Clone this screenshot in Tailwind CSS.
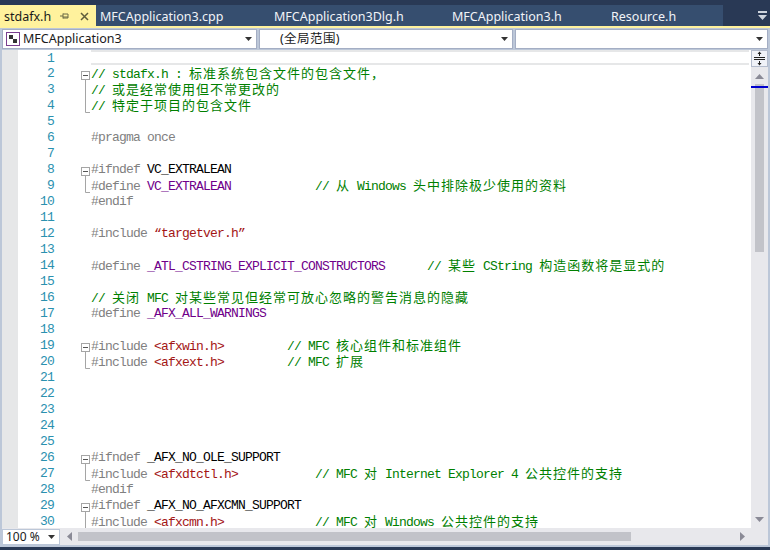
<!DOCTYPE html>
<html lang="zh-CN">
<head>
    <meta charset="UTF-8">
    <title>stdafx.h</title>
    <script src="https://cdn.jsdelivr.net/npm/@tailwindcss/browser@4"></script>
</head>
<body class="w-[770px] h-[550px] overflow-hidden bg-[#293955] font-['Noto_Sans',sans-serif]">
    <!-- Tab well -->
    <div class="h-[5px]"></div>
    <div class="flex h-[21px] text-[12.5px] leading-[21px]">
        <div class="flex w-[96px] items-center bg-[#fff29d] pl-1 pt-[1px] text-[#1a1a1a]">
            <span class="w-[56px]">stdafx.h</span>
            <svg width="10" height="10" viewBox="0 0 10 10"><path d="M0 5h3M3 2.500v5M3 3h5v4H3M3 6h5" fill="none" stroke="#6b6a45"/></svg>
            <svg width="9" height="9" viewBox="0 0 9 9" class="ml-[10px]"><path d="M1 1l7 7M8 1l-7 7" stroke="#5f5d3c" stroke-width="1.500"/></svg>
        </div>
        <div class="flex w-[627px] items-center gap-[51px] bg-[#364e6f] pl-1 pt-[1px] text-[#f1f3f7]">
            <span class="w-[123px] whitespace-nowrap">MFCApplication3.cpp</span>
            <span class="w-[127px] whitespace-nowrap">MFCApplication3Dlg.h</span>
            <span class="w-[108px] whitespace-nowrap">MFCApplication3.h</span>
            <span>Resource.h</span>
        </div>
        <div class="flex flex-1 items-center justify-end pr-[3px]">
            <svg width="9" height="9" viewBox="0 0 9 9"><path d="M0 0h9v2H0zM0 4h9L4.500 9z" fill="#ced4dd"/></svg>
        </div>
    </div>
    <div class="h-[2px] bg-[#fff29d]"></div>

    <div class="flex h-[519px] flex-col border-x-2 border-b-2 border-[#bcc7d8] bg-[#e8e8ec]">
        <!-- Navigation bar -->
        <div class="flex h-[22px] shrink-0 gap-[2px] bg-[#bcc7d8] py-[1px] text-[12.5px] leading-[18px] text-[#1a1a1a]">
            <div class="flex w-[255px] items-center border border-[#a4aec4] bg-white pl-[3px] pr-1">
                <svg width="14" height="14" viewBox="0 0 14 14" class="mr-[3px]"><rect x="0.500" y="0.500" width="13" height="13" fill="#fff" stroke="#7a3f8f"/><path d="M3 3h4v4H3zM7 7h4v4H7z" fill="#333"/></svg>
                <span class="flex-1">MFCApplication3</span>
                <svg width="7" height="4" viewBox="0 0 7 4"><path d="M0 0h7L3.500 4z" fill="#333"/></svg>
            </div>
            <div class="flex w-[254px] items-center border border-[#a4aec4] bg-white pl-[20px] pr-1">
                <span class="flex-1">(全局范围)</span>
                <svg width="7" height="4" viewBox="0 0 7 4"><path d="M0 0h7L3.500 4z" fill="#333"/></svg>
            </div>
            <div class="flex flex-1 items-center justify-end border border-[#a4aec4] bg-white pr-1">
                <svg width="7" height="4" viewBox="0 0 7 4"><path d="M0 0h7L3.500 4z" fill="#333"/></svg>
            </div>
        </div>

        <!-- Editor -->
        <div class="flex h-[478px] shrink-0 overflow-hidden bg-white">
            <div class="flex-1 overflow-hidden font-['Liberation_Mono',monospace] text-[13px] leading-[16px] tracking-[-0.8px] [&_pre]:pt-[1px] [&_pre]:font-[inherit] [&_.text-right]:pt-[1px]">
                <div class="flex h-[15px]">
                    <div class="w-[16px] bg-[#e6e7e8]"></div>
                    <div class="w-[36px] text-right text-[#2b91af]">1</div>
                    <div class="w-[37px]"></div>
                    <div class="mr-[2px] flex-1 border-y-2 border-[#e6e7e8]"></div>
                </div>
                <div class="flex h-[16px]">
                    <div class="w-[16px] bg-[#e6e7e8]"></div>
                    <div class="w-[36px] text-right text-[#2b91af]">2</div>
                    <div class="flex w-[37px] justify-end"><svg width="10" height="16" viewBox="0 0 10 16"><rect x="0.500" y="6.500" width="8" height="8" fill="#fff" stroke="#a5a5a5"/><path d="M2 10.500h5" stroke="#555"/><path d="M4.500 15v1" stroke="#a5a5a5"/></svg></div>
                    <pre class="text-[#008000]">// stdafx.h : <span class="font-['Noto_Sans_CJK_SC'] text-[13px] leading-none tracking-[1px]">标准系统包含文件的包含文件，</span></pre>
                </div>
                <div class="flex h-[16px]">
                    <div class="w-[16px] bg-[#e6e7e8]"></div>
                    <div class="w-[36px] text-right text-[#2b91af]">3</div>
                    <div class="flex w-[37px] justify-end"><svg width="10" height="16" viewBox="0 0 10 16"><path d="M4.500 0v16" stroke="#a5a5a5"/></svg></div>
                    <pre class="text-[#008000]">// <span class="font-['Noto_Sans_CJK_SC'] text-[13px] leading-none tracking-[1px]">或是经常使用但不常更改的</span></pre>
                </div>
                <div class="flex h-[16px]">
                    <div class="w-[16px] bg-[#e6e7e8]"></div>
                    <div class="w-[36px] text-right text-[#2b91af]">4</div>
                    <div class="flex w-[37px] justify-end"><svg width="10" height="16" viewBox="0 0 10 16"><path d="M4.500 0v15.500H9" fill="none" stroke="#a5a5a5"/></svg></div>
                    <pre class="text-[#008000]">// <span class="font-['Noto_Sans_CJK_SC'] text-[13px] leading-none tracking-[1px]">特定于项目的包含文件</span></pre>
                </div>
                <div class="flex h-[16px]">
                    <div class="w-[16px] bg-[#e6e7e8]"></div>
                    <div class="w-[36px] text-right text-[#2b91af]">5</div>
                </div>
                <div class="flex h-[16px]">
                    <div class="w-[16px] bg-[#e6e7e8]"></div>
                    <div class="w-[36px] text-right text-[#2b91af]">6</div>
                    <div class="w-[37px]"></div>
                    <pre class="text-[#808080]">#pragma once</pre>
                </div>
                <div class="flex h-[16px]">
                    <div class="w-[16px] bg-[#e6e7e8]"></div>
                    <div class="w-[36px] text-right text-[#2b91af]">7</div>
                </div>
                <div class="flex h-[16px]">
                    <div class="w-[16px] bg-[#e6e7e8]"></div>
                    <div class="w-[36px] text-right text-[#2b91af]">8</div>
                    <div class="flex w-[37px] justify-end"><svg width="10" height="16" viewBox="0 0 10 16"><rect x="0.500" y="6.500" width="8" height="8" fill="#fff" stroke="#a5a5a5"/><path d="M2 10.500h5" stroke="#555"/><path d="M4.500 15v1" stroke="#a5a5a5"/></svg></div>
                    <pre class="text-[#808080]">#ifndef <span class="text-black">VC_EXTRALEAN</span></pre>
                </div>
                <div class="flex h-[16px]">
                    <div class="w-[16px] bg-[#e6e7e8]"></div>
                    <div class="w-[36px] text-right text-[#2b91af]">9</div>
                    <div class="flex w-[37px] justify-end"><svg width="10" height="16" viewBox="0 0 10 16"><path d="M4.500 0v15.500H9" fill="none" stroke="#a5a5a5"/></svg></div>
                    <pre class="text-[#808080]">#define <span class="text-[#6f008a]">VC_EXTRALEAN</span>            <span class="text-[#008000]">// <span class="font-['Noto_Sans_CJK_SC'] text-[13px] leading-none tracking-[1px]">从</span> Windows <span class="font-['Noto_Sans_CJK_SC'] text-[13px] leading-none tracking-[1px]">头中排除极少使用的资料</span></span></pre>
                </div>
                <div class="flex h-[16px]">
                    <div class="w-[16px] bg-[#e6e7e8]"></div>
                    <div class="w-[36px] text-right text-[#2b91af]">10</div>
                    <div class="w-[37px]"></div>
                    <pre class="text-[#808080]">#endif</pre>
                </div>
                <div class="flex h-[16px]">
                    <div class="w-[16px] bg-[#e6e7e8]"></div>
                    <div class="w-[36px] text-right text-[#2b91af]">11</div>
                </div>
                <div class="flex h-[16px]">
                    <div class="w-[16px] bg-[#e6e7e8]"></div>
                    <div class="w-[36px] text-right text-[#2b91af]">12</div>
                    <div class="w-[37px]"></div>
                    <pre class="text-[#808080]">#include <span class="text-[#a31515]">“targetver.h”</span></pre>
                </div>
                <div class="flex h-[16px]">
                    <div class="w-[16px] bg-[#e6e7e8]"></div>
                    <div class="w-[36px] text-right text-[#2b91af]">13</div>
                </div>
                <div class="flex h-[16px]">
                    <div class="w-[16px] bg-[#e6e7e8]"></div>
                    <div class="w-[36px] text-right text-[#2b91af]">14</div>
                    <div class="w-[37px]"></div>
                    <pre class="text-[#808080]">#define <span class="text-[#6f008a]">_ATL_CSTRING_EXPLICIT_CONSTRUCTORS</span>      <span class="text-[#008000]">// <span class="font-['Noto_Sans_CJK_SC'] text-[13px] leading-none tracking-[1px]">某些</span> CString <span class="font-['Noto_Sans_CJK_SC'] text-[13px] leading-none tracking-[1px]">构造函数将是显式的</span></span></pre>
                </div>
                <div class="flex h-[16px]">
                    <div class="w-[16px] bg-[#e6e7e8]"></div>
                    <div class="w-[36px] text-right text-[#2b91af]">15</div>
                </div>
                <div class="flex h-[16px]">
                    <div class="w-[16px] bg-[#e6e7e8]"></div>
                    <div class="w-[36px] text-right text-[#2b91af]">16</div>
                    <div class="w-[37px]"></div>
                    <pre class="text-[#008000]">// <span class="font-['Noto_Sans_CJK_SC'] text-[13px] leading-none tracking-[1px]">关闭</span> MFC <span class="font-['Noto_Sans_CJK_SC'] text-[13px] leading-none tracking-[1px]">对某些常见但经常可放心忽略的警告消息的隐藏</span></pre>
                </div>
                <div class="flex h-[16px]">
                    <div class="w-[16px] bg-[#e6e7e8]"></div>
                    <div class="w-[36px] text-right text-[#2b91af]">17</div>
                    <div class="w-[37px]"></div>
                    <pre class="text-[#808080]">#define <span class="text-[#6f008a]">_AFX_ALL_WARNINGS</span></pre>
                </div>
                <div class="flex h-[16px]">
                    <div class="w-[16px] bg-[#e6e7e8]"></div>
                    <div class="w-[36px] text-right text-[#2b91af]">18</div>
                </div>
                <div class="flex h-[16px]">
                    <div class="w-[16px] bg-[#e6e7e8]"></div>
                    <div class="w-[36px] text-right text-[#2b91af]">19</div>
                    <div class="flex w-[37px] justify-end"><svg width="10" height="16" viewBox="0 0 10 16"><rect x="0.500" y="6.500" width="8" height="8" fill="#fff" stroke="#a5a5a5"/><path d="M2 10.500h5" stroke="#555"/><path d="M4.500 15v1" stroke="#a5a5a5"/></svg></div>
                    <pre class="text-[#808080]">#include <span class="text-[#a31515]">&lt;afxwin.h&gt;</span>         <span class="text-[#008000]">// MFC <span class="font-['Noto_Sans_CJK_SC'] text-[13px] leading-none tracking-[1px]">核心组件和标准组件</span></span></pre>
                </div>
                <div class="flex h-[16px]">
                    <div class="w-[16px] bg-[#e6e7e8]"></div>
                    <div class="w-[36px] text-right text-[#2b91af]">20</div>
                    <div class="flex w-[37px] justify-end"><svg width="10" height="16" viewBox="0 0 10 16"><path d="M4.500 0v15.500H9" fill="none" stroke="#a5a5a5"/></svg></div>
                    <pre class="text-[#808080]">#include <span class="text-[#a31515]">&lt;afxext.h&gt;</span>         <span class="text-[#008000]">// MFC <span class="font-['Noto_Sans_CJK_SC'] text-[13px] leading-none tracking-[1px]">扩展</span></span></pre>
                </div>
                <div class="flex h-[16px]">
                    <div class="w-[16px] bg-[#e6e7e8]"></div>
                    <div class="w-[36px] text-right text-[#2b91af]">21</div>
                </div>
                <div class="flex h-[16px]">
                    <div class="w-[16px] bg-[#e6e7e8]"></div>
                    <div class="w-[36px] text-right text-[#2b91af]">22</div>
                </div>
                <div class="flex h-[16px]">
                    <div class="w-[16px] bg-[#e6e7e8]"></div>
                    <div class="w-[36px] text-right text-[#2b91af]">23</div>
                </div>
                <div class="flex h-[16px]">
                    <div class="w-[16px] bg-[#e6e7e8]"></div>
                    <div class="w-[36px] text-right text-[#2b91af]">24</div>
                </div>
                <div class="flex h-[16px]">
                    <div class="w-[16px] bg-[#e6e7e8]"></div>
                    <div class="w-[36px] text-right text-[#2b91af]">25</div>
                </div>
                <div class="flex h-[16px]">
                    <div class="w-[16px] bg-[#e6e7e8]"></div>
                    <div class="w-[36px] text-right text-[#2b91af]">26</div>
                    <div class="flex w-[37px] justify-end"><svg width="10" height="16" viewBox="0 0 10 16"><rect x="0.500" y="6.500" width="8" height="8" fill="#fff" stroke="#a5a5a5"/><path d="M2 10.500h5" stroke="#555"/><path d="M4.500 15v1" stroke="#a5a5a5"/></svg></div>
                    <pre class="text-[#808080]">#ifndef <span class="text-black">_AFX_NO_OLE_SUPPORT</span></pre>
                </div>
                <div class="flex h-[16px]">
                    <div class="w-[16px] bg-[#e6e7e8]"></div>
                    <div class="w-[36px] text-right text-[#2b91af]">27</div>
                    <div class="flex w-[37px] justify-end"><svg width="10" height="16" viewBox="0 0 10 16"><path d="M4.500 0v15.500H9" fill="none" stroke="#a5a5a5"/></svg></div>
                    <pre class="text-[#808080]">#include <span class="text-[#a31515]">&lt;afxdtctl.h&gt;</span>           <span class="text-[#008000]">// MFC <span class="font-['Noto_Sans_CJK_SC'] text-[13px] leading-none tracking-[1px]">对</span> Internet Explorer 4 <span class="font-['Noto_Sans_CJK_SC'] text-[13px] leading-none tracking-[1px]">公共控件的支持</span></span></pre>
                </div>
                <div class="flex h-[16px]">
                    <div class="w-[16px] bg-[#e6e7e8]"></div>
                    <div class="w-[36px] text-right text-[#2b91af]">28</div>
                    <div class="w-[37px]"></div>
                    <pre class="text-[#808080]">#endif</pre>
                </div>
                <div class="flex h-[16px]">
                    <div class="w-[16px] bg-[#e6e7e8]"></div>
                    <div class="w-[36px] text-right text-[#2b91af]">29</div>
                    <div class="flex w-[37px] justify-end"><svg width="10" height="16" viewBox="0 0 10 16"><rect x="0.500" y="6.500" width="8" height="8" fill="#fff" stroke="#a5a5a5"/><path d="M2 10.500h5" stroke="#555"/><path d="M4.500 15v1" stroke="#a5a5a5"/></svg></div>
                    <pre class="text-[#808080]">#ifndef <span class="text-black">_AFX_NO_AFXCMN_SUPPORT</span></pre>
                </div>
                <div class="flex h-[16px]">
                    <div class="w-[16px] bg-[#e6e7e8]"></div>
                    <div class="w-[36px] text-right text-[#2b91af]">30</div>
                    <div class="flex w-[37px] justify-end"><svg width="10" height="16" viewBox="0 0 10 16"><path d="M4.500 0v16" stroke="#a5a5a5"/></svg></div>
                    <pre class="text-[#808080]">#include <span class="text-[#a31515]">&lt;afxcmn.h&gt;</span>             <span class="text-[#008000]">// MFC <span class="font-['Noto_Sans_CJK_SC'] text-[13px] leading-none tracking-[1px]">对</span> Windows <span class="font-['Noto_Sans_CJK_SC'] text-[13px] leading-none tracking-[1px]">公共控件的支持</span></span></pre>
                </div>
            </div>

            <!-- Vertical scrollbar -->
            <div class="relative flex w-[17px] shrink-0 flex-col items-center bg-[#e8e8ec]">
                <div class="flex h-[17px] w-full items-center justify-center border border-[#b4bccd] bg-[#f0f2f8]">
                    <svg width="11" height="15" viewBox="0 0 11 15"><path d="M0 6.500h11M0 8.500h11M5.500 1v4M5.500 10v4" stroke="#222"/><path d="M3.500 3l2-2.500 2 2.500zM3.500 12l2 2.500 2-2.500z" fill="#222"/></svg>
                </div>
                <svg width="9" height="5" viewBox="0 0 9 5" class="mt-[7px]"><path d="M4.500 0L9 5H0z" fill="#8a8a96"/></svg>
                <div class="mt-[5px] h-[168px] w-[9px] bg-[#c2c3c9]"></div>
                <div class="flex-1"></div>
                <svg width="9" height="5" viewBox="0 0 9 5" class="mb-[6px]"><path d="M0 0h9L4.500 5z" fill="#8a8a96"/></svg>
                <div class="absolute inset-x-0 top-[36px] h-[2px] bg-[#0000cd]"></div>
            </div>
        </div>

        <!-- Bottom bar: zoom and horizontal scrollbar -->
        <div class="flex h-[17px] shrink-0 items-center bg-[#e8e8ec]">
            <div class="flex h-[16px] w-[58px] items-center border border-[#bcc7d8] bg-white pl-[3px] pr-1 text-[12px] leading-[14px] text-[#1a1a1a]">
                <span class="flex-1">100 %</span>
                <svg width="7" height="4" viewBox="0 0 7 4"><path d="M0 0h7L3.500 4z" fill="#333"/></svg>
            </div>
            <svg width="5" height="9" viewBox="0 0 5 9" class="ml-[7px]"><path d="M5 0v9L0 4.500z" fill="#8a8a96"/></svg>
            <div class="ml-[6px] h-[9px] w-[553px] bg-[#c2c3c9]"></div>
            <div class="flex-1"></div>
            <svg width="5" height="9" viewBox="0 0 5 9" class="mr-[23px]"><path d="M0 0v9l5-4.500z" fill="#8a8a96"/></svg>
        </div>
    </div>
</body>
</html>
